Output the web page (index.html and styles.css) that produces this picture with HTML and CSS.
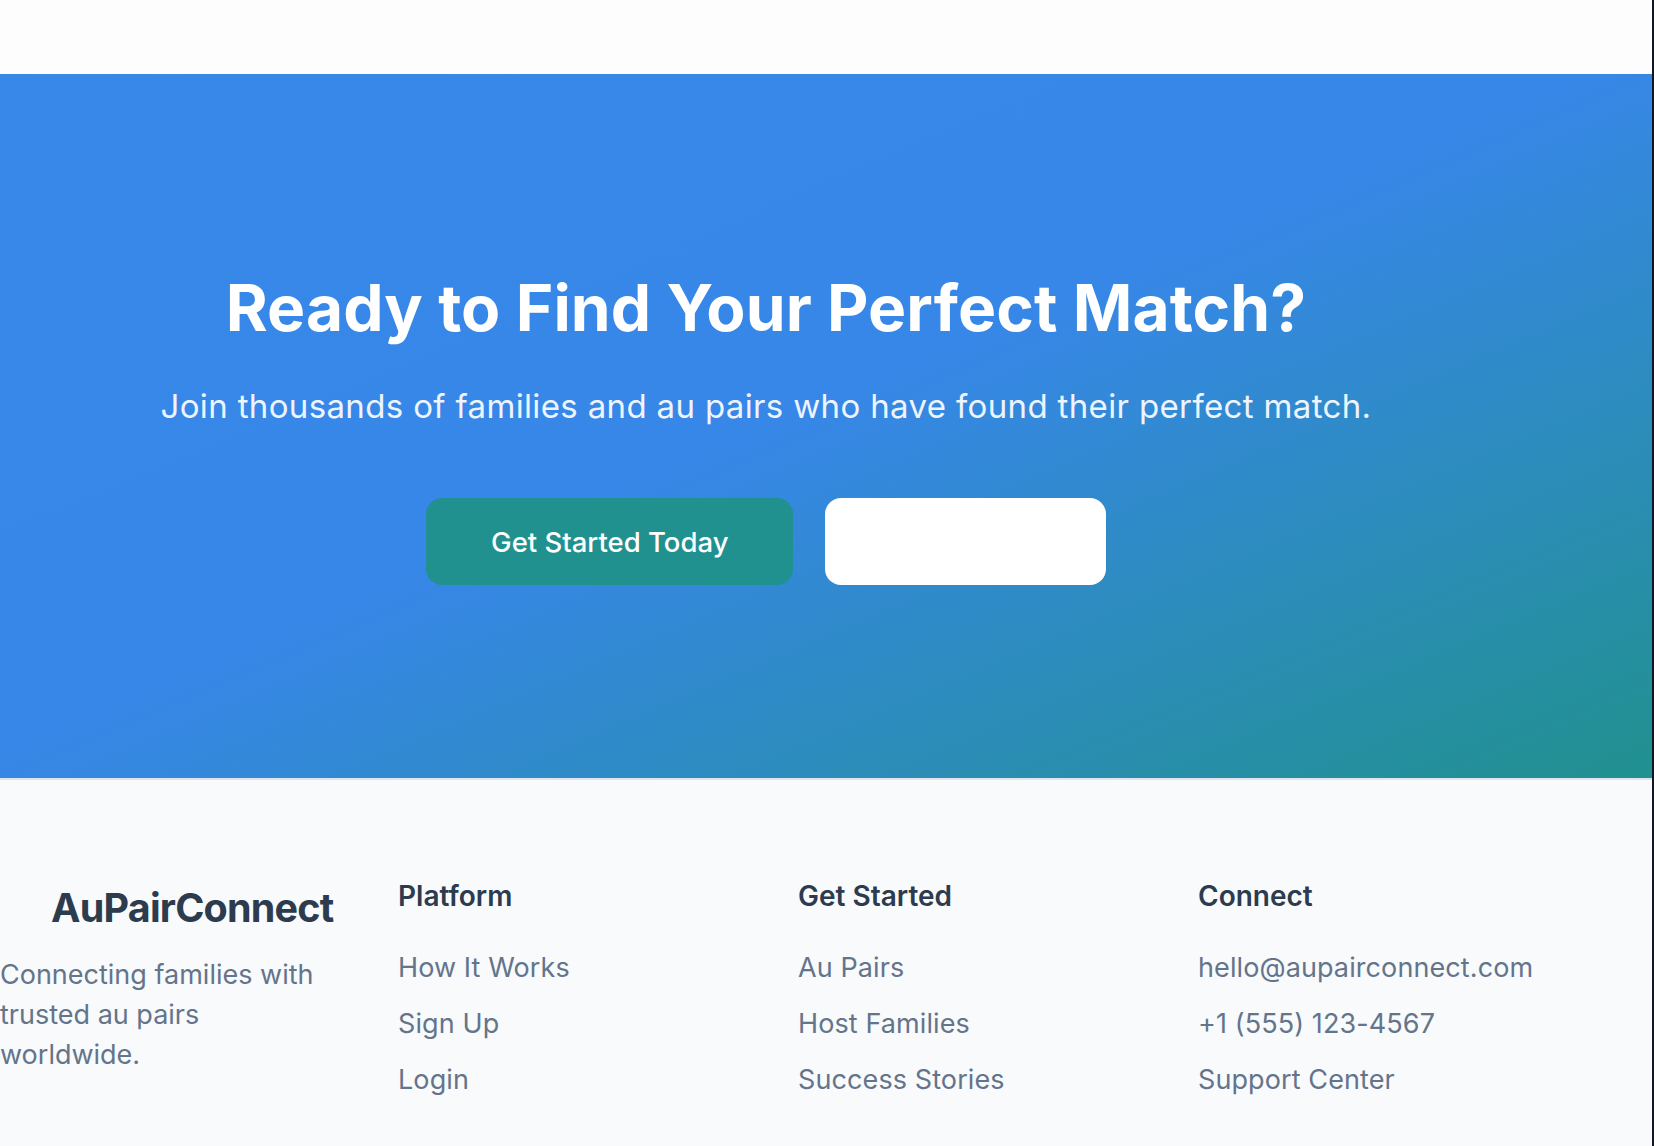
FILE: index.html
```html
<!DOCTYPE html>
<html lang="en">
<head>
<meta charset="utf-8">
<title>AuPairConnect</title>
<link rel="stylesheet" href="styles.css">
</head>
<body>
<div class="page">
  <header class="topbar"></header>
  <section class="hero">
    <div class="hero-inner">
      <h1 class="hero-title">Ready to Find Your Perfect Match?</h1>
      <p class="hero-sub">Join thousands of families and au pairs who have found their perfect match.</p>
      <div class="hero-actions">
        <a class="btn btn-primary" href="#">Get Started Today</a>
        <a class="btn btn-light" href="#">Learn More</a>
      </div>
    </div>
  </section>
  <footer class="footer">
    <div class="footer-grid">
      <div class="footer-brand">
        <div class="brand-name">AuPairConnect</div>
        <p class="brand-desc">Connecting families with trusted au pairs worldwide.</p>
      </div>
      <div class="footer-col">
        <h3 class="col-title">Platform</h3>
        <ul class="col-links">
          <li><a href="#">How It Works</a></li>
          <li><a href="#">Sign Up</a></li>
          <li><a href="#">Login</a></li>
        </ul>
      </div>
      <div class="footer-col">
        <h3 class="col-title">Get Started</h3>
        <ul class="col-links">
          <li><a href="#">Au Pairs</a></li>
          <li><a href="#">Host Families</a></li>
          <li><a href="#">Success Stories</a></li>
        </ul>
      </div>
      <div class="footer-col">
        <h3 class="col-title">Connect</h3>
        <ul class="col-links">
          <li><a href="#">hello@aupairconnect.com</a></li>
          <li><a href="#">+1 (555) 123-4567</a></li>
          <li><a href="#">Support Center</a></li>
        </ul>
      </div>
    </div>
  </footer>
</div>
</body>
</html>
```

FILE: styles.css
```css
* { box-sizing: border-box; }

html, body {
  margin: 0;
  padding: 0;
  height: 100%;
}

body {
  font-family: Inter, "Noto Sans", "Liberation Sans", sans-serif;
  background: #f8fafc;
  overflow: hidden;
}

.page {
  width: 1654px;
  min-height: 1146px;
  border-right: 2px solid #111722;
  background: #f8fafc;
  overflow: hidden;
}

.topbar {
  height: 74px;
  background: #fdfdfe;
}

.hero {
  background: linear-gradient(to bottom right, #3888ea 0%, #3787e8 48%, #21918f 100%);
  padding: 198px 0 193px;
}

.hero-inner {
  width: 1532px;
  text-align: center;
}

.hero-title {
  margin: 0;
  font-size: 64px;
  line-height: 72px;
  font-weight: 700;
  letter-spacing: 0.1px;
  color: #ffffff;
}

.hero-sub {
  margin: 38px 0 0;
  font-size: 33px;
  line-height: 48px;
  font-weight: 400;
  letter-spacing: 0.35px;
  color: #eef4fe;
}

.hero-actions {
  margin-top: 68px;
  display: flex;
  justify-content: center;
  gap: 32px;
}

.btn {
  display: inline-flex;
  align-items: center;
  justify-content: center;
  height: 87px;
  padding: 0 65px;
  border-radius: 16px;
  font-size: 27.5px;
  font-weight: 500;
  text-decoration: none;
  color: #ffffff;
}

.btn-primary {
  background: #21918f;
}

.btn-light {
  background: #ffffff;
  color: #ffffff;
  padding: 0 65px;
}

.footer {
  border-top: 2px solid #dfe5ee;
  background: #f8fafc;
  padding: 98px 0 60px;
}

.footer-grid {
  margin-left: -2px;
  width: 1552px;
  display: grid;
  grid-template-columns: repeat(4, 352px);
  column-gap: 48px;
}

.brand-name {
  margin-left: 53px;
  font-size: 39.5px;
  line-height: 60px;
  font-weight: 700;
  letter-spacing: -0.02em;
  color: #2d3b4e;
}

.brand-desc {
  margin: 17px 0 0 2px;
  max-width: 320px;
  font-size: 27px;
  line-height: 40px;
  color: #64748b;
}

.col-title {
  margin: 0;
  font-size: 28px;
  line-height: 36px;
  font-weight: 600;
  color: #2d3b4e;
}

.col-links {
  list-style: none;
  margin: 36px 0 0;
  padding: 0;
  display: flex;
  flex-direction: column;
  gap: 20px;
}

.col-links li {
  font-size: 27px;
  line-height: 36px;
  letter-spacing: 0.1px;
}

.col-links a {
  color: #64748b;
  text-decoration: none;
}
```
